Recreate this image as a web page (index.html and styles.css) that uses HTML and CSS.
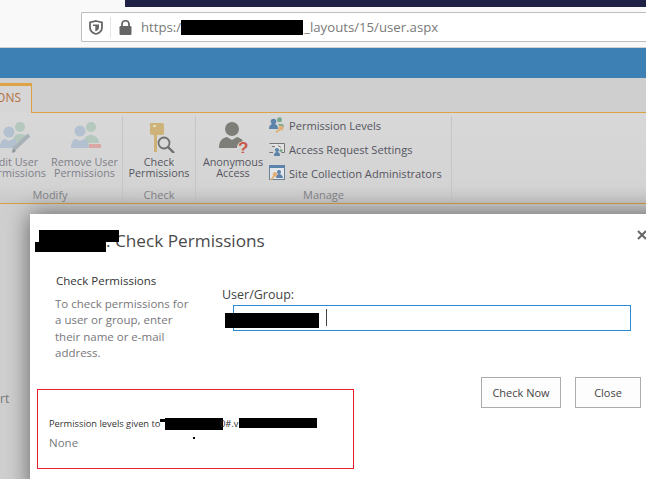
FILE: index.html
```html
<!DOCTYPE html>
<html lang="en">
<head>
<meta charset="utf-8">
<title>Check Permissions</title>
<link rel="stylesheet" href="styles.css">
</head>
<body>
<div class="window">
  <header class="browser">
    <div class="strip"></div>
    <div class="urlbar">
      <svg class="shield" width="14" height="15" viewBox="0 0 14 15"><path d="M7 1 13 2.500v5c0 3.200-2.600 5.500-6 6.500C3.600 13 1 10.700 1 7.500v-5z" fill="#fff" stroke="#666" stroke-width="1.800"/><path d="M4 4.500h6v3c0 1.800-1.300 3-3 3.800-.3-.2-.5-.3-.7-.4V6H4z" fill="#666"/></svg>
      <span class="sep"></span>
      <svg class="lock" width="13" height="15" viewBox="0 0 13 15"><path d="M3 6V4.200a3.500 3.500 0 0 1 7 0V6" fill="none" stroke="#666" stroke-width="1.800"/><rect x="0.500" y="6" width="12" height="9" rx="1.200" fill="#666"/></svg>
      <span class="url">https:/<span class="redact-url"></span>_layouts/15/user.aspx</span>
    </div>
  </header>
  <div class="suitebar"></div>
  <div class="tabs"><div class="tab">PERMISSIONS</div></div>
  <div class="ribbon">
    <section class="group group-modify">
      <div class="group-items">
        <div class="cmd cmd-faded">
          <svg class="cmd-icon" width="32" height="32" viewBox="0 0 32 32"><circle cx="20" cy="6" r="5" fill="#b4c8bd"/><path d="M13 19c1-5 3-6 7-6s5 1 6 3l-6 6z" fill="#b4c8bd"/><circle cx="9" cy="11" r="5.500" fill="#b3c0cf"/><path d="M0 27c0-7 3-9 5-9l4 2 4-2c3 0 5 3 5 9z" fill="#b3c0cf"/><path d="M14 28 29 14" stroke="#a9b1b8" stroke-width="4"/><path d="m13 32-1-1 1-4 3 3z" fill="#8f979e"/></svg>
          <span>Edit User<br>Permissions</span>
        </div>
        <div class="cmd cmd-faded">
          <svg class="cmd-icon" width="32" height="32" viewBox="0 0 32 32"><circle cx="22" cy="6" r="5" fill="#b4c8bd"/><path d="M15 22c0-6 3-8 7-8s8 3 8 8z" fill="#b4c8bd"/><circle cx="11" cy="10" r="5.500" fill="#b3c0cf"/><path d="M2 27c0-7 3-9 5-9l4 2 4-2c3 0 5 3 5 9z" fill="#b3c0cf"/><rect x="20" y="23" width="12" height="4" fill="#d9a8a4"/></svg>
          <span>Remove User<br>Permissions</span>
        </div>
      </div>
      <div class="group-label">Modify</div>
    </section>
    <section class="group group-check">
      <div class="group-items">
        <div class="cmd">
          <svg class="cmd-icon" width="32" height="32" viewBox="0 0 32 32"><path d="M7 2h12q2 0 2 2v8q0 2-2 2h-5v17h-3V14H9q-2 0-2-2z" fill="#cdb377"/><rect x="10" y="4" width="3" height="2" fill="#e6dcbc"/><circle cx="21" cy="22" r="5.500" fill="#d8d8d8" stroke="#6f6f6f" stroke-width="1.800"/><path d="m25 26 6 6" stroke="#6f6f6f" stroke-width="2.400"/></svg>
          <span>Check<br>Permissions</span>
        </div>
      </div>
      <div class="group-label">Check</div>
    </section>
    <section class="group group-manage">
      <div class="group-items">
        <div class="cmd cmd-anon">
          <svg class="cmd-icon" width="32" height="32" viewBox="0 0 32 32"><circle cx="15" cy="8" r="7" fill="#7e7e78"/><path d="M2 27c0-7 3-10 8-11l5 3 5-3c3 1 5 2 6 4-4 1-6 3-6 7H2z" fill="#7e7e78"/><text x="21" y="33" class="q-mark">?</text></svg>
          <span>Anonymous<br>Access</span>
        </div>
        <ul class="mini-list">
          <li>
            <svg width="16" height="16" viewBox="0 0 16 16"><circle cx="10.500" cy="2.800" r="2.500" fill="#7aa98f"/><circle cx="4.500" cy="4.500" r="2.800" fill="#5c83aa"/><path d="M0 12c0-4 2-5 4.500-5S9 8 9 12z" fill="#5c83aa"/><path d="M9 7h5l1 3-3 1z" fill="#7aa98f"/><circle cx="12" cy="11" r="2.500" fill="#dfb178"/><path d="m11 12-4 3.500" stroke="#dfb178" stroke-width="1.800"/></svg>
            <span>Permission Levels</span>
          </li>
          <li>
            <svg width="16" height="16" viewBox="0 0 16 16"><path d="M.5 2.500h15v9h-3M4 11.500H.5z" fill="#e2e2e2" stroke="#777"/><path d="M3 5.500h3M9 4.500l3 2" stroke="#777"/><circle cx="8" cy="9" r="2" fill="#5c83aa"/><path d="M5 15c0-3 1-4 3-4s3 1 3 4z" fill="#5c83aa"/><circle cx="12" cy="9.500" r="1.600" fill="#7aa98f"/></svg>
            <span>Access Request Settings</span>
          </li>
          <li>
            <svg width="16" height="16" viewBox="0 0 16 16"><rect x=".5" y=".5" width="15" height="14" fill="#e3e6ea" stroke="#6b7f95"/><rect x="0" y="0" width="16" height="3" fill="#5c83aa"/><circle cx="10" cy="7" r="2" fill="#5c83aa"/><path d="M7 13c0-2 1-4 3-4s4 2 4 4z" fill="#5c83aa"/><circle cx="6" cy="9.500" r="2.400" fill="#dfb178"/><path d="m5 11-3 4" stroke="#dfb178" stroke-width="1.800"/></svg>
            <span>Site Collection Administrators</span>
          </li>
        </ul>
      </div>
      <div class="group-label">Manage</div>
    </section>
  </div>
  <div class="page-behind"><span class="behind-text">rt</span></div>

  <div class="dialog">
    <h1 class="dialog-title"><span class="redact redact-title-a"></span><span class="redact redact-title-b"></span>. Check Permissions</h1>
    <svg class="dialog-close" width="10" height="10" viewBox="0 0 10 10"><path d="m1 1 8 8M9 1 1 9" stroke="#666" stroke-width="2"/></svg>
    <div class="form-row">
      <div class="form-help">
        <h2 class="help-title">Check Permissions</h2>
        <p class="help-text">To check permissions for a user or group, enter their name or e-mail address.</p>
      </div>
      <div class="form-field">
        <label class="field-label">User/Group:</label>
        <div class="field-input"><span class="redact redact-user"></span><span class="caret"></span></div>
      </div>
    </div>
    <div class="lower-row">
      <div class="result">
        <p class="result-line">Permission levels given to<span class="redact redact-arrow"></span><span class="redact redact-r1"></span><span class="redact redact-r2"></span><span class="redact redact-dot"></span><span class="result-frag">0#.v</span></p>
        <p class="result-none">None</p>
      </div>
      <div class="actions">
        <button class="btn btn-check">Check Now</button>
        <button class="btn btn-close">Close</button>
      </div>
    </div>
  </div>
</div>
</body>
</html>
```

FILE: styles.css
```css
* { box-sizing: border-box; }
html, body { margin: 0; padding: 0; }
body { font-family: "Open Sans", "Noto Sans", sans-serif; background: #cfcfcf; }
.window { position: relative; width: 646px; height: 479px; overflow: hidden; display: flex; flex-direction: column; }

.browser { height: 48px; background: #f9f9fa; border-bottom: 1px solid #d0d0d0; padding-left: 81px; position: relative; flex: none; }
.strip { position: absolute; left: 125px; right: 0; top: 0; height: 7px; background: #1f2244; }
.urlbar { position: absolute; left: 81px; right: 0; top: 12px; height: 30px; background: #fff; border: 1px solid #bdbdbd; border-right: 0; border-radius: 2px 0 0 2px; display: flex; align-items: center; padding-left: 7px; }
.shield { flex: none; }
.sep { width: 1px; height: 21px; background: #e4e4e4; margin-left: 7px; margin-right: 8px; flex: none; }
.lock { flex: none; }
.url { margin-left: 9px; font-size: 13.200px; color: #7a7a7a; white-space: nowrap; display: flex; align-items: center; }
.redact-url { display: inline-block; width: 122px; height: 15px; background: #000; margin-left: 0; margin-right: 1px; }

.suitebar { height: 30px; background: #3d80b4; flex: none; }
.tabs { height: 35px; background: #cfcfcf; padding-top: 5px; flex: none; border-bottom: 1px solid #dca243; }
.tab { width: 32px; height: 30px; background: #d6d6d6; border-top: 3px solid #dca243; border-right: 1px solid #dca243; font-size: 12px; line-height: 24px; color: #b5713f; display: flex; justify-content: flex-end; padding-right: 10px; white-space: nowrap; }

.ribbon { height: 91px; background: linear-gradient(#d8d8d8, #d4d4d4 80%, #c9c9c9); border-bottom: 1px solid #d9a044; display: flex; flex: none; padding-top: 3px; }
.group { display: flex; flex-direction: column; border-right: 1px solid #c6c6c6; height: 86px; flex: none; }
.group-modify { width: 145px; margin-left: -22px; }
.group-check { width: 73px; }
.group-manage { width: 256px; }
.group-items { display: flex; height: 72px; justify-content: center; }
.group-label { text-align: center; font-size: 11px; line-height: 14px; color: #838388; }
.cmd { display: flex; flex-direction: column; align-items: center; font-size: 10.800px; line-height: 11px; color: #55555f; text-align: center; width: 70px; flex: none; white-space: nowrap; }
.cmd-faded { color: #7f7f8a; width: 69px; }
.cmd-icon { display: block; margin-top: 5px; margin-bottom: 3px; }
.cmd-anon { width: 68px; margin-right: 2px; margin-left: 1px; }
.q-mark { font: bold 17px "Liberation Sans", sans-serif; fill: #c9584a; }
.group-manage .group-items { justify-content: flex-start; padding-left: 2px; }
.mini-list { list-style: none; margin: -3px 0 0; padding: 0; flex: none; font-size: 11.100px; color: #55555f; }
.mini-list li { display: flex; align-items: center; gap: 4px; height: 24px; white-space: nowrap; }

.page-behind { flex: 1; background: #cfcfcf; padding-top: 187px; font-size: 12px; color: #777; }
.behind-text { display: block; line-height: 16px; }

.dialog { position: absolute; left: 30px; top: 214px; width: 640px; height: 280px; background: #fff; box-shadow: 0 0 22px rgba(0, 0, 0, .55); color: #444; }
.redact { position: absolute; background: #000; display: block; }
.dialog-title { position: relative; margin: 0; padding: 14px 0 0 76px; font-size: 17.200px; line-height: 26px; font-weight: 400; color: #4a4a4a; height: 55px; }
.redact-title-a { left: 9px; top: 16px; width: 80px; height: 12px; }
.redact-title-b { left: 5px; top: 28px; width: 71px; height: 10px; }
.dialog-close { position: absolute; left: 607px; top: 16px; }
.form-row { display: flex; height: 108px; }
.form-help { width: 192px; padding-left: 25px; flex: none; }
.help-title { margin: 4px 0 7px; font-size: 11.500px; line-height: 16px; font-weight: 400; color: #333; padding-left: 1px; }
.help-text { margin: 0; font-size: 11.500px; line-height: 16.300px; color: #77777b; width: 138px; }
.form-field { flex: none; width: 409px; }
.field-label { display: block; font-size: 12.500px; line-height: 18px; margin-top: 17px; color: #444; }
.field-input { position: relative; margin: 1px 0 0 11px; width: 398px; height: 26px; border: 1px solid #2a8ad4; }
.redact-user { left: -9px; top: 7px; width: 94px; height: 15px; }
.caret { position: absolute; left: 92px; top: 3px; width: 1px; height: 17px; background: #444; }
.lower-row { display: flex; }
.result { position: relative; margin: 12px 0 0 7px; width: 317px; height: 80px; border: 1px solid #e3202c; padding: 27px 11px 0; flex: none; }
.result-line { margin: 0; font-size: 9.300px; line-height: 13px; color: #333; white-space: nowrap; }
.result-frag { position: absolute; left: 182px; top: 27px; }
.redact-arrow { left: 122px; top: 29px; width: 6px; height: 3px; }
.redact-r1 { left: 127px; top: 28px; width: 58px; height: 12px; }
.redact-r2 { left: 201px; top: 28px; width: 78px; height: 10px; }
.redact-dot { left: 155px; top: 47px; width: 2px; height: 2px; }
.result-none { margin: 5px 0 0; font-size: 11.500px; line-height: 16px; color: #77777b; }
.actions { display: flex; gap: 14px; margin-left: 127px; align-items: flex-start; }
.btn { height: 31px; border: 1px solid #ababab; background: #fdfdfd; font: 400 11px "Open Sans", sans-serif; color: #444; padding: 0; }
.btn-check { width: 80px; }
.btn-close { width: 66px; }
```
